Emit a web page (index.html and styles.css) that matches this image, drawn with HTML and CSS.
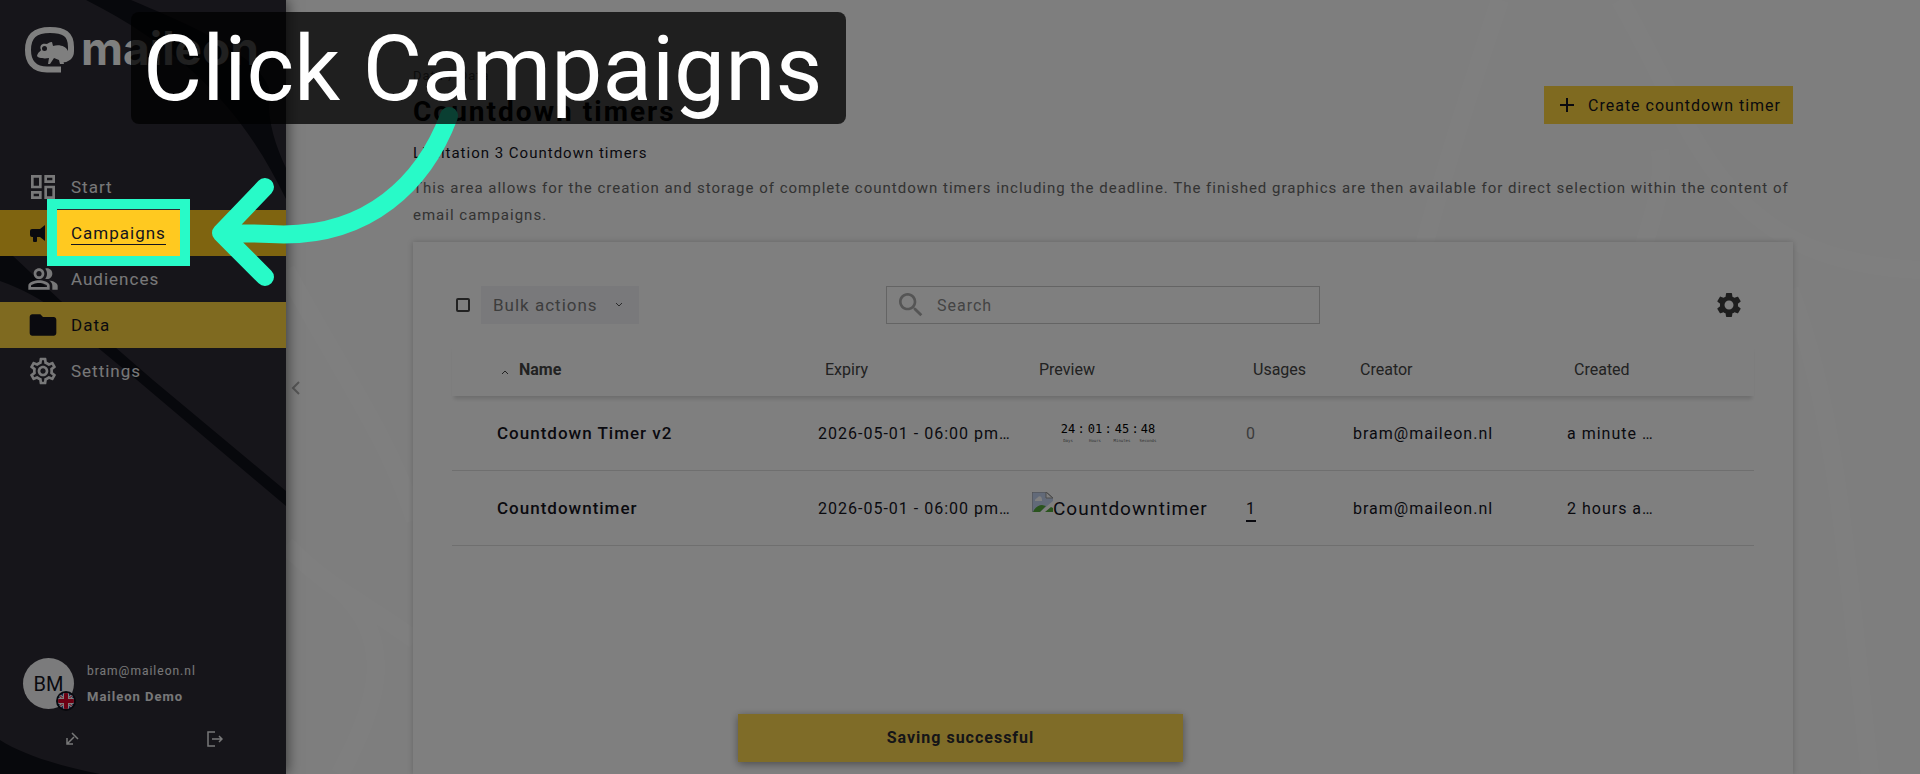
FILE: index.html
```html
<!DOCTYPE html>
<html lang="en">
<head>
<meta charset="utf-8">
<title>Maileon – Countdown timers</title>
<meta name="viewport" content="width=device-width, initial-scale=1">
<link rel="stylesheet" href="styles.css">
</head>
<body>
<div class="app">
  <aside class="sidebar">
    <svg class="sidebar-art" viewBox="0 0 286 774" preserveAspectRatio="none" aria-hidden="true">
      <path d="M86 0H131C190 25 255 52 269 88C267 120 274 142 286 168V199C250 125 200 58 86 0Z"/>
      <path d="M0 244L13 256L61 301L115 347L153 380L286 491V506L137 380L97 347C70 322 48 298 0 281Z"/>
      <path d="M0 740C22 754 55 765 100 774H0Z"/>
    </svg>
    <a class="logo" href="#" aria-label="maileon">
      <svg class="logo-mark" viewBox="0 0 50 46" aria-hidden="true">
        <path class="ring" d="M36 42.500H22C8 42.500 3 34 3 23C3 9 10 3 25 3C39 3 46 7 46 20V24C46 30 42 32.500 37 32.500"/>
        <path d="M12 29C13 25 15 25 16 23C14 19 17 16 21 17C23 17 24 15 27 15L28 19C34 17 41 19 43 24C44 30 42 32 38 33L39 37H35L34 33L29 31L25 37H23L24 31C19 32 13 31 12 29Z"/>
        <circle class="eye" cx="19.500" cy="21.500" r="2.500"/>
      </svg>
      <span class="logo-word">maileon</span>
    </a>
    <nav class="nav">
      <a class="nav-item" href="#">
        <svg class="icon" viewBox="0 0 24 24" aria-hidden="true"><path d="M19 5v2h-4V5h4M9 5v6H5V5h4m10 8v6h-4v-6h4M9 17v2H5v-2h4M21 3h-8v6h8V3zM11 3H3v10h8V3zm10 8h-8v10h8V11zm-10 4H3v6h8v-6z"/></svg>
        <span>Start</span>
      </a>
      <a class="nav-item hovered" href="#">
        <svg class="icon" viewBox="-1 -4 32 32" aria-hidden="true"><path d="M12 8H4A2 2 0 0 0 2 10V14A2 2 0 0 0 4 16H5V20A1 1 0 0 0 6 21H8A1 1 0 0 0 9 20V16H12L17 20V4L12 8M21.500 12C21.500 13.710 20.540 15.260 19 16V8C20.530 8.750 21.500 10.300 21.500 12Z"/></svg>
        <span>Campaigns</span>
      </a>
      <a class="nav-item" href="#">
        <svg class="icon" viewBox="0 0 24 24" aria-hidden="true"><path d="M16.67 13.13C18.04 14.06 19 15.32 19 17v3h4v-3c0-2.18-3.57-3.47-6.33-3.87zM15 12c2.21 0 4-1.79 4-4s-1.79-4-4-4c-.47 0-.91.1-1.33.24C14.5 5.27 15 6.58 15 8s-.5 2.73-1.33 3.76c.42.14.86.24 1.33.24zM9 12c2.21 0 4-1.79 4-4s-1.79-4-4-4-4 1.79-4 4 1.79 4 4 4zm0-6c1.1 0 2 .9 2 2s-.9 2-2 2-2-.9-2-2 .9-2 2-2zm0 7c-2.67 0-8 1.34-8 4v3h16v-3c0-2.66-5.33-4-8-4zm6 5H3v-.99C3.2 16.29 6.3 15 9 15s5.8 1.29 6 2v1z"/></svg>
        <span>Audiences</span>
      </a>
      <a class="nav-item active" href="#" aria-current="page">
        <svg class="icon" viewBox="0 0 24 24" aria-hidden="true"><path d="M10 4H4c-1.1 0-1.99.9-1.99 2L2 18c0 1.1.9 2 2 2h16c1.1 0 2-.9 2-2V8c0-1.1-.9-2-2-2h-8l-2-2z"/></svg>
        <span>Data</span>
      </a>
      <a class="nav-item" href="#">
        <svg class="icon" viewBox="0 0 24 24" aria-hidden="true"><path d="M19.43 12.98c.04-.32.07-.64.07-.98 0-.34-.03-.66-.07-.98l2.11-1.65c.19-.15.24-.42.12-.64l-2-3.46c-.09-.16-.26-.25-.44-.25-.06 0-.12.01-.17.03l-2.49 1c-.52-.4-1.08-.73-1.69-.98l-.38-2.65C14.46 2.18 14.25 2 14 2h-4c-.25 0-.46.18-.49.42l-.38 2.65c-.61.25-1.17.59-1.69.98l-2.49-1c-.06-.02-.12-.03-.18-.03-.17 0-.34.09-.43.25l-2 3.46c-.13.22-.07.49.12.64l2.11 1.65c-.04.32-.07.65-.07.98 0 .33.03.66.07.98l-2.11 1.65c-.19.15-.24.42-.12.64l2 3.46c.09.16.26.25.44.25.06 0 .12-.01.17-.03l2.49-1c.52.4 1.08.73 1.69.98l.38 2.65c.03.24.24.42.49.42h4c.25 0 .46-.18.49-.42l.38-2.65c.61-.25 1.17-.59 1.69-.98l2.49 1c.06.02.12.03.18.03.17 0 .34-.09.43-.25l2-3.46c.12-.22.07-.49-.12-.64l-2.11-1.65zm-1.98-1.71c.04.31.05.52.05.73 0 .21-.02.43-.05.73l-.14 1.13.89.7 1.08.84-.7 1.21-1.27-.51-1.04-.42-.9.68c-.43.32-.84.56-1.25.73l-1.06.43-.16 1.13-.2 1.35h-1.4l-.19-1.35-.16-1.13-1.06-.43c-.43-.18-.83-.41-1.23-.71l-.91-.7-1.06.43-1.27.51-.7-1.21 1.08-.84.89-.7-.14-1.13c-.03-.31-.05-.54-.05-.74s.02-.43.05-.73l.14-1.13-.89-.7-1.08-.84.7-1.21 1.27.51 1.04.42.9-.68c.43-.32.84-.56 1.25-.73l1.06-.43.16-1.13.2-1.35h1.39l.19 1.35.16 1.13 1.06.43c.43.18.83.41 1.23.71l.91.7 1.06-.43 1.27-.51.7 1.21-1.07.85-.89.7.14 1.13zM12 8c-2.21 0-4 1.79-4 4s1.790 4 4 4 4-1.790 4-4-1.790-4-4-4zm0 6c-1.1 0-2-.9-2-2s.9-2 2-2 2 .9 2 2-.9 2-2 2z"/></svg>
        <span>Settings</span>
      </a>
    </nav>
    <div class="account">
      <div class="user">
        <div class="avatar">
          <span>BM</span>
          <svg class="flag" viewBox="0 0 20 20" aria-label="English">
            <circle class="flag-ring" cx="10" cy="10" r="10"/>
            <clipPath id="disc"><circle cx="10" cy="10" r="8"/></clipPath>
            <g clip-path="url(#disc)">
              <path class="flag-blue" d="M2 2h16v16H2z"/>
              <path class="flag-white-line" d="M2 3L18 17M18 3L2 17"/>
              <path class="flag-red-line" d="M2 3L18 17M18 3L2 17"/>
              <path class="flag-white" d="M7 0h6v7h7v6h-7v7H7v-7H0V7h7z"/>
              <path class="flag-red" d="M8 0h4v8h8v4h-8v8H8v-8H0V8h8z"/>
            </g>
          </svg>
        </div>
        <div class="user-text">
          <span>bram@maileon.nl</span>
          <strong>Maileon Demo</strong>
        </div>
      </div>
      <div class="account-actions">
        <button type="button" aria-label="Undock"><svg viewBox="0 0 16 16" aria-hidden="true"><path d="M3 7v6h6M3 13l7-7M8 2l6 6"/></svg></button>
        <button type="button" aria-label="Log out"><svg viewBox="0 0 16 16" aria-hidden="true"><path d="M8 1H1v14h7M5 8h10M12 5l3 3-3 3"/></svg></button>
      </div>
    </div>
  </aside>

  <main class="main">
    <svg class="main-art" viewBox="286 0 1634 774" preserveAspectRatio="none" aria-hidden="true">
      <path d="M1500 0C1470 90 1450 150 1420 260M1620 0C1700 140 1720 260 1920 270M1660 150C1665 190 1650 220 1640 260M1790 290C1840 420 1850 600 1870 774M286 270C340 370 390 440 415 520M286 545C330 590 360 600 415 640M340 774C380 700 395 640 340 590"/>
    </svg>
    <button class="collapse" type="button" aria-label="Collapse menu"><svg viewBox="0 0 10 14" aria-hidden="true"><path d="M8 1L2 7l6 6"/></svg></button>
    <div class="page">
      <header class="page-head">
        <div>
          <div class="crumbs">Data / Data</div>
          <h1>Countdown timers</h1>
        </div>
        <button class="create" type="button"><svg viewBox="0 0 14 14" aria-hidden="true"><path d="M7 0v14M0 7h14"/></svg>Create countdown timer</button>
      </header>
      <p class="limit">Limitation 3 Countdown timers</p>
      <p class="intro">This area allows for the creation and storage of complete countdown timers including the deadline. The finished graphics are then available for direct selection within the content of email campaigns.</p>
      <section class="card">
        <div class="toolbar">
          <div class="bulk">
            <input type="checkbox" aria-label="Select all">
            <div class="bulk-select">
              <select aria-label="Bulk actions"><option>Bulk actions</option></select>
              <svg viewBox="0 0 8 6" aria-hidden="true"><path d="M1 1l3 3 3-3"/></svg>
            </div>
          </div>
          <div class="search">
            <svg viewBox="0 0 24 24" aria-hidden="true"><path d="M15.5 14h-.79l-.28-.27C15.41 12.59 16 11.11 16 9.5 16 5.91 13.09 3 9.5 3S3 5.91 3 9.5 5.91 16 9.5 16c1.61 0 3.09-.59 4.23-1.57l.27.28v.79l5 4.99L20.49 19l-4.99-5zm-6 0C7.01 14 5 11.99 5 9.5S7.01 5 9.5 5 14 7.01 14 9.5 11.99 14 9.5 14z"/></svg>
            <input type="text" placeholder="Search" aria-label="Search">
          </div>
          <button class="gear" type="button" aria-label="Table settings"><svg viewBox="0 0 24 24" aria-hidden="true"><path d="M19.14 12.94c.04-.3.06-.61.06-.94 0-.32-.02-.64-.07-.94l2.03-1.58c.18-.14.23-.41.12-.61l-1.92-3.32c-.12-.22-.37-.29-.59-.22l-2.39.96c-.5-.38-1.03-.7-1.62-.94l-.36-2.54c-.04-.24-.24-.41-.48-.41h-3.840c-.24 0-.43.17-.47.41l-.36 2.54c-.59.24-1.13.57-1.62.94l-2.39-.96c-.22-.08-.47 0-.59.22L2.74 8.87c-.12.21-.08.47.12.61l2.03 1.58c-.05.3-.09.63-.09.94s.02.64.07.94l-2.03 1.58c-.18.14-.23.41-.12.61l1.92 3.32c.12.22.37.29.59.22l2.39-.96c.5.38 1.03.7 1.62.94l.36 2.54c.05.24.24.41.48.41h3.84c.24 0 .44-.17.47-.41l.36-2.54c.59-.24 1.13-.56 1.62-.94l2.39.96c.22.08.47 0 .59-.22l1.92-3.32c.12-.22.07-.47-.12-.61l-2.01-1.58zM12 15.6c-1.98 0-3.600-1.620-3.600-3.600s1.620-3.600 3.600-3.600 3.600 1.620 3.600 3.600-1.620 3.600-3.600 3.600z"/></svg></button>
        </div>
        <table class="timers">
          <colgroup><col class="c-pad"><col class="c-name"><col class="c-mid"><col class="c-mid"><col class="c-small"><col class="c-mid"><col></colgroup>
          <thead>
            <tr>
              <td></td>
              <th class="sorted" scope="col" aria-sort="ascending"><svg viewBox="0 0 8 6" aria-hidden="true"><path d="M1 5l3-3 3 3"/></svg>Name</th>
              <th scope="col">Expiry</th><th scope="col">Preview</th><th scope="col">Usages</th><th scope="col">Creator</th><th scope="col">Created</th>
            </tr>
          </thead>
          <tbody>
            <tr>
              <td></td>
              <td class="name">Countdown Timer v2</td>
              <td>2026-05-01 - 06:00 pm…</td>
              <td>
                <svg class="countdown" viewBox="0 0 97 20">
                  <g class="digits"><text x="8" y="10">24</text><text x="21" y="10">:</text><text x="35" y="10">01</text><text x="48" y="10">:</text><text x="62" y="10">45</text><text x="75" y="10">:</text><text x="88" y="10">48</text></g>
                  <g class="units"><text x="8" y="19">Days</text><text x="35" y="19">Hours</text><text x="62" y="19">Minutes</text><text x="88" y="19">Seconds</text></g>
                </svg>
              </td>
              <td class="none">0</td>
              <td>bram@maileon.nl</td>
              <td>a minute …</td>
            </tr>
            <tr>
              <td></td>
              <td class="name">Countdowntimer</td>
              <td>2026-05-01 - 06:00 pm…</td>
              <td>
                <span class="missing">
                  <svg viewBox="0 0 21 20" aria-hidden="true">
                    <path class="sky" d="M0 0H14L21 6V9L8 20H0Z"/>
                    <path class="cloud" d="M3 9C3 6 5 7 6 5C8 3 10 5 10 8V9Z"/>
                    <path class="hill" d="M1 20C3 15 7 13 10 13L14 14L8 20ZM13 20L19 15L21 16V20Z"/>
                    <path class="fold" d="M14 0V6H21Z"/>
                    <path class="edge" d="M0 20V0H14L21 6"/>
                  </svg>
                  <span>Countdowntimer</span>
                </span>
              </td>
              <td><a class="count" href="#">1</a></td>
              <td>bram@maileon.nl</td>
              <td>2 hours a…</td>
            </tr>
          </tbody>
        </table>
      </section>
    </div>
  </main>
  <div class="toast" role="status">Saving successful</div>
</div>

<div class="tour">
  <div class="spotlight"></div>
  <svg class="arrow" viewBox="0 0 860 300" aria-hidden="true">
    <path d="M449 116C425 180 370 240 270 234Q245 233 221 233M265 187L221 233L265 277"/>
  </svg>
  <div class="tour-label">Click Campaigns</div>
</div>
</body>
</html>
```

FILE: styles.css
```css
* { box-sizing: border-box; }

body {
  margin: 0;
  font-family: Roboto, "Liberation Sans", sans-serif;
  font-size: 16px;
  letter-spacing: 1px;
  color: #14141e;
}

button, input, select { font: inherit; letter-spacing: inherit; color: inherit; }
button { border: 0; padding: 0; background: none; }

.app {
  position: relative;
  display: flex;
  height: 100vh;
  overflow: hidden;
}

/* Sidebar */
.sidebar {
  position: relative;
  z-index: 1;
  display: flex;
  flex-direction: column;
  flex: 0 0 286px;
  padding: 27px 0 23px;
  background: #2d2b34;
  color: #f0f0f2;
  box-shadow: 2px 0 12px rgba(0, 0, 0, .5);
}
.sidebar-art {
  position: absolute;
  inset: 0;
  width: 100%;
  height: 100%;
  fill: #0f1019;
}
.logo, .nav, .account { position: relative; }

.logo {
  display: flex;
  align-items: center;
  gap: 6px;
  margin-left: 25px;
  height: 46px;
  color: #fff;
  text-decoration: none;
}
.logo-mark { width: 50px; height: 46px; fill: #fff; }
.logo-mark .ring { fill: none; stroke: #fff; stroke-width: 6; }
.logo-mark .eye { fill: #2d2b34; }
.logo-word { font-family: Inter, Roboto, sans-serif; font-size: 46px; font-weight: 700; letter-spacing: 0; line-height: 42px; height: 46px; }

.nav { margin-top: 91px; }
.nav-item {
  display: flex;
  align-items: center;
  gap: 12px;
  height: 46px;
  padding-left: 27px;
  font-size: 17px;
  color: #f0f0f2;
  text-decoration: none;
}
.icon { width: 32px; height: 32px; fill: currentColor; }
.nav-item.hovered { background: #ffc920; color: #14141e; }
.nav-item.hovered span { border-bottom: 1px solid #14141e; line-height: 22px; }
.nav-item.active { background: #ffd440; color: #14141e; }

.account { margin-top: auto; }
.user { display: flex; align-items: center; gap: 13px; padding-left: 23px; }
.avatar {
  position: relative;
  display: grid;
  place-items: center;
  width: 51px;
  height: 51px;
  border-radius: 50%;
  background: #f6f6f8;
  color: #14141e;
  font-size: 20px;
  letter-spacing: 0;
}
.flag { position: absolute; right: -2px; bottom: -2px; width: 20px; height: 20px; }
.flag-ring { fill: #0f1019; }
.flag-blue { fill: #2450a0; }
.flag-white { fill: #fff; }
.flag-red { fill: #d80027; }
.flag-white-line { stroke: #fff; stroke-width: 3; }
.flag-red-line { stroke: #d80027; stroke-width: 1; }
.user-text { display: grid; gap: 8px; font-size: 13px; line-height: 17px; }
.user-text span { font-size: 12px; }
.account-actions { display: grid; grid-template-columns: 1fr 1fr; margin-top: 22px; }
.account-actions button { height: 20px; color: #f0f0f2; }
.account-actions svg { width: 16px; height: 16px; fill: none; stroke: currentColor; stroke-width: 1.5; }

/* Main area */
.main {
  position: relative;
  display: flex;
  flex: 1;
  min-width: 0;
  padding: 0 127px;
  background: #fcfcfc;
}
.main-art {
  position: absolute;
  inset: 0;
  width: 100%;
  height: 100%;
  fill: none;
  stroke: #fff;
  stroke-width: 18;
}
.collapse { position: absolute; left: 5px; top: 50%; margin-top: -6px; }
.collapse svg { display: block; width: 10px; height: 14px; fill: none; stroke: #aaa; stroke-width: 2; }

.page { position: relative; display: flex; flex-direction: column; flex: 1; min-width: 0; padding-top: 67px; }
.page-head { display: flex; justify-content: space-between; align-items: flex-start; }
.crumbs { font-size: 13px; line-height: 18px; color: #666; }
h1 { margin: 11px 0 0; font-size: 28px; line-height: 32px; letter-spacing: 2px; color: #000; }
.create {
  display: flex;
  align-items: center;
  gap: 14px;
  height: 38px;
  margin-top: 19px;
  padding: 0 12px 0 16px;
  background: #ffd440;
}
.create svg { width: 14px; height: 14px; fill: none; stroke: currentColor; stroke-width: 2; }
.limit { margin: 15px 0 0; font-size: 15px; line-height: 20px; }
.intro { margin: 12px 0 0; font-size: 15px; line-height: 27px; color: #666; }

.card {
  flex: 1;
  margin-top: 13px;
  padding: 44px 39px;
  background: #fff;
  box-shadow: 0 0 6px rgba(0, 0, 0, .2);
}
.toolbar { display: grid; grid-template-columns: 1fr 434px 1fr; align-items: center; }
.bulk { display: flex; align-items: center; gap: 11px; padding-left: 4px; }
.bulk > input {
  appearance: none;
  width: 14px;
  height: 14px;
  margin: 0;
  border: 2px solid #444;
  border-radius: 2px;
}
.bulk-select { position: relative; }
.bulk-select select {
  appearance: none;
  display: block;
  width: 158px;
  height: 38px;
  padding: 0 12px;
  border: 0;
  background: #f3f3f7;
  color: #7a7a7a;
  font-size: 17px;
}
.bulk-select svg { position: absolute; right: 16px; top: 16px; width: 8px; height: 6px; fill: none; stroke: #555; }
.search { display: flex; align-items: center; gap: 10px; height: 38px; padding-left: 8px; border: 1px solid #c8c8c8; }
.search svg { width: 32px; height: 32px; fill: #aaa; }
.search input { flex: 1; min-width: 0; border: 0; padding: 0; outline: 0; background: none; }
.search input::placeholder { color: #888; opacity: 1; }
.gear { justify-self: end; margin-right: 10px; }
.gear svg { display: block; width: 30px; height: 30px; fill: #3c3c3c; }

/* Timer table */
.timers { width: 100%; margin-top: 18px; table-layout: fixed; border-collapse: separate; border-spacing: 0; }
.c-pad { width: 45px; }
.c-name { width: 321px; }
.c-mid { width: 214px; }
.c-small { width: 107px; }
.timers thead tr { height: 54px; box-shadow: 0 5px 4px -2px rgba(0, 0, 0, .14); }
.timers th { padding: 0 0 0 7px; text-align: left; font-weight: 400; letter-spacing: 0; color: #444; }
.timers th.sorted { padding-left: 4px; font-weight: 700; }
.sorted svg { width: 8px; height: 6px; margin-right: 10px; fill: none; stroke: #444; }
.timers td { padding: 0; white-space: nowrap; }
.timers tbody td { height: 75px; border-bottom: 1px solid #dedede; }
.timers .name { font-size: 17px; font-weight: 500; }
.timers .none { color: #777; }
.count { color: inherit; text-decoration: underline; text-decoration-thickness: 2px; text-underline-offset: 6px; }
.countdown { display: block; width: 97px; height: 20px; margin-left: 28px; text-anchor: middle; letter-spacing: 0; font-family: "DejaVu Sans Mono", monospace; }
.digits { font-size: 12px; }
.units { font-size: 4px; fill: #666; }
.missing { display: flex; align-items: flex-start; margin-top: -4px; font-size: 19px; }
.missing svg { width: 21px; height: 20px; }
.missing span { padding-top: 5px; }
.sky { fill: #c5d5f2; }
.cloud { fill: #fff; }
.hill { fill: #55a83c; }
.fold { fill: #fff; stroke: #999; }
.edge { fill: none; stroke: #999; }

.toast {
  position: absolute;
  z-index: 2;
  left: 50%;
  bottom: 12px;
  width: 445px;
  margin-left: -222px;
  line-height: 48px;
  text-align: center;
  font-weight: 700;
  background: #ffd950;
  color: #2a2a30;
  box-shadow: 0 2px 8px rgba(0, 0, 0, .4);
}

/* Guided tour layer */
.tour { position: absolute; inset: 0; z-index: 5; overflow: hidden; pointer-events: none; }
.spotlight {
  position: absolute;
  left: 47px;
  top: 199px;
  width: 143px;
  height: 67px;
  border: 10px solid #28fac8;
  box-shadow: 0 0 0 4000px rgba(0, 0, 0, .5);
}
.arrow { position: absolute; left: 0; top: 0; width: 860px; height: 300px; fill: none; stroke: #28fac8; stroke-width: 18; stroke-linecap: round; stroke-linejoin: round; }
.tour-label {
  position: absolute;
  left: 131px;
  top: 12px;
  padding: 2px 24px 0 12px;
  border-radius: 8px;
  background: rgba(0, 0, 0, .75);
  color: #fff;
  font-size: 91px;
  line-height: 110px;
  letter-spacing: 0;
  white-space: nowrap;
}
```
